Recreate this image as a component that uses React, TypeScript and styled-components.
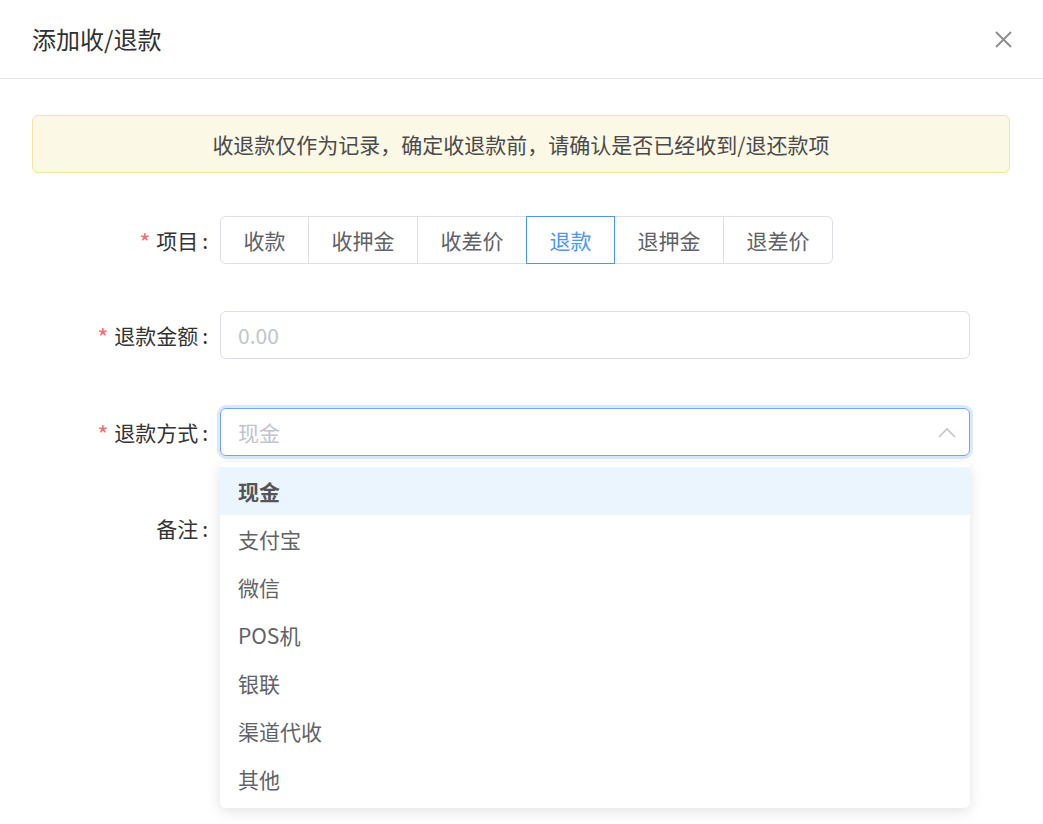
import React from "react";
import styled, { createGlobalStyle } from "styled-components";

const GlobalStyle = createGlobalStyle`
  html, body { margin: 0; padding: 0; background: #fff; }
  body {
    font-family: "Noto Sans CJK SC", "Noto Sans", sans-serif;
    color: #606266;
  }
  * { box-sizing: border-box; }
`;

const Dialog = styled.div`
  width: 1043px;
  min-height: 824px;
  background: #fff;
`;

const Header = styled.header`
  height: 79px;
  padding: 0 31px 0 32px;
  display: flex;
  align-items: center;
  justify-content: space-between;
  border-bottom: 1px solid #e8e8e8;
`;

const Title = styled.h2`
  margin: 0;
  font-size: 24px;
  font-weight: 400;
  color: #303133;
  line-height: 1;
`;

const CloseButton = styled.button`
  border: 0;
  background: none;
  padding: 0;
  width: 18px;
  height: 18px;
  display: flex;
  align-items: center;
  justify-content: center;
  cursor: pointer;
`;

const Body = styled.div`
  padding: 36px 33px 0 32px;
`;

const Alert = styled.div`
  height: 58px;
  display: flex;
  align-items: center;
  justify-content: center;
  background: #fcf8e6;
  border: 1px solid #f6e39c;
  border-radius: 6px;
  font-size: 21px;
  color: #4a4a4a;
`;

const Form = styled.form`
  margin-top: 43px;
  display: flex;
  flex-direction: column;
  gap: 48px;
`;

const Row = styled.div<{ $top?: boolean; $shift?: number }>`
  display: flex;
  align-items: ${(p) => (p.$top ? "flex-start" : "center")};
  min-height: 48px;
  margin-bottom: ${(p) => p.$shift ?? 0}px;
`;

const Label = styled.label`
  width: 188px;
  padding-right: 12px;
  text-align: right;
  font-size: 21px;
  color: #333;
  line-height: 48px;
  flex-shrink: 0;
`;

const Star = styled.span`
  color: #f56c6c;
  margin-right: 6px;
  display: inline-block;
  transform: translateY(2px) scale(1.15);
`;

const Colon = styled.span`
  margin-left: 4px;
`;

const Segmented = styled.div`
  display: flex;
`;

const SegButton = styled.button<{ $active?: boolean; $first?: boolean; $last?: boolean }>`
  height: 48px;
  padding: 0 22.5px;
  font-family: inherit;
  font-size: 21px;
  background: #fff;
  color: ${(p) => (p.$active ? "#4d94f7" : "#606266")};
  border: 1px solid ${(p) => (p.$active ? "#4d94f7" : "#dcdfe6")};
  margin-left: -1px;
  position: relative;
  z-index: ${(p) => (p.$active ? 1 : 0)};
  border-radius: ${(p) =>
    p.$first ? "6px 0 0 6px" : p.$last ? "0 6px 6px 0" : "0"};
  &:first-child { margin-left: 0; }
  cursor: pointer;
`;

const Input = styled.input`
  width: 750px;
  height: 48px;
  border: 1px solid #dcdfe6;
  border-radius: 6px;
  padding: 0 17px;
  font-family: inherit;
  font-size: 21px;
  color: #606266;
  outline: none;
  &::placeholder { color: #c0c4cc; }
`;

const SelectWrap = styled.div`
  position: relative;
  width: 750px;
`;

const SelectBox = styled.div`
  height: 48px;
  border: 1px solid #6ea6f6;
  box-shadow: 0 0 0 3px #dde9fb;
  border-radius: 6px;
  padding: 0 13px 0 17px;
  display: flex;
  align-items: center;
  justify-content: space-between;
  font-size: 21px;
`;

const Placeholder = styled.span`
  color: #c0c4cc;
`;

const Dropdown = styled.ul`
  position: absolute;
  top: calc(100% + 6px);
  left: 0;
  width: 100%;
  margin: 0;
  padding: 5px 0;
  list-style: none;
  background: #fff;
  border-radius: 6px;
  box-shadow: 0 3px 14px rgba(0, 0, 0, 0.12);
  z-index: 10;
`;

const Option = styled.li<{ $hover?: boolean }>`
  height: 48px;
  line-height: 48px;
  padding: 0 18px;
  font-size: 21px;
  color: ${(p) => (p.$hover ? "#555" : "#606266")};
  font-weight: ${(p) => (p.$hover ? 700 : 400)};
  background: ${(p) => (p.$hover ? "#eaf5fe" : "#fff")};
`;

const TextArea = styled.textarea`
  width: 750px;
  height: 100px;
  border: 1px solid #dcdfe6;
  border-radius: 6px;
  padding: 10px 17px;
  font-family: inherit;
  font-size: 21px;
  resize: none;
`;

const items = ["收款", "收押金", "收差价", "退款", "退押金", "退差价"];
const options = ["现金", "支付宝", "微信", "POS机", "银联", "渠道代收", "其他"];

export default function App() {
  return (
    <>
      <GlobalStyle />
      <Dialog>
        <Header>
          <Title>添加收/退款</Title>
          <CloseButton aria-label="关闭">
            <svg width="17" height="17" viewBox="0 0 17 17">
              <path d="M1 1 L16 16 M16 1 L1 16" stroke="#8c8c8c" strokeWidth="1.8" fill="none" />
            </svg>
          </CloseButton>
        </Header>
        <Body>
          <Alert>收退款仅作为记录，确定收退款前，请确认是否已经收到/退还款项</Alert>
          <Form>
            <Row $shift={-1}>
              <Label>
                <Star>*</Star>项目<Colon>:</Colon>
              </Label>
              <Segmented>
                {items.map((t, i) => (
                  <SegButton
                    type="button"
                    key={t}
                    $active={t === "退款"}
                    $first={i === 0}
                    $last={i === items.length - 1}
                  >
                    {t}
                  </SegButton>
                ))}
              </Segmented>
            </Row>
            <Row $shift={1}>
              <Label>
                <Star>*</Star>退款金额<Colon>:</Colon>
              </Label>
              <Input placeholder="0.00" />
            </Row>
            <Row>
              <Label>
                <Star>*</Star>退款方式<Colon>:</Colon>
              </Label>
              <SelectWrap>
                <SelectBox>
                  <Placeholder>现金</Placeholder>
                  <svg width="18" height="12" viewBox="0 0 18 12">
                    <polyline points="1,11 9,3 17,11" stroke="#c0c4cc" strokeWidth="1.6" fill="none" />
                  </svg>
                </SelectBox>
                <Dropdown>
                  {options.map((o, i) => (
                    <Option key={o} $hover={i === 0}>
                      {o}
                    </Option>
                  ))}
                </Dropdown>
              </SelectWrap>
            </Row>
            <Row $top>
              <Label>
                备注<Colon>:</Colon>
              </Label>
              <TextArea />
            </Row>
          </Form>
        </Body>
      </Dialog>
    </>
  );
}
